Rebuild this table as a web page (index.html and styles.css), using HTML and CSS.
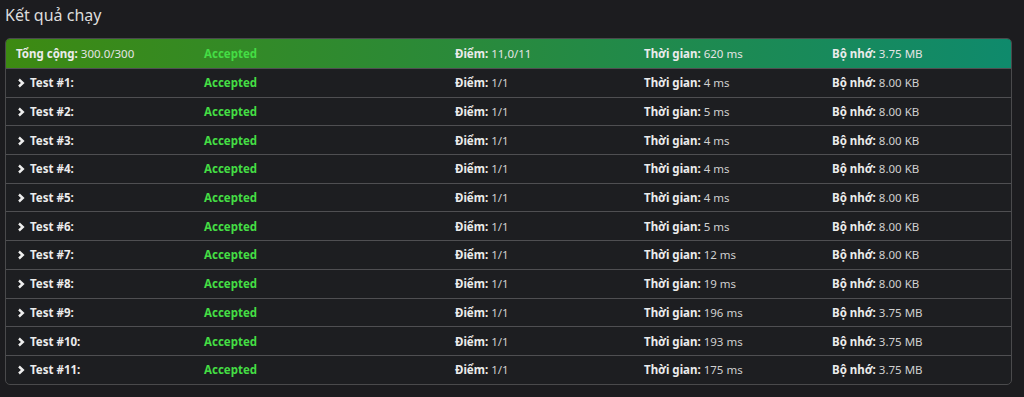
FILE: index.html
```html
<!DOCTYPE html>
<html lang="vi">
<head>
<meta charset="utf-8">
<title>Kết quả chạy</title>
<link rel="stylesheet" href="styles.css">
</head>
<body>
<div class="page">
  <h4 class="title">Kết quả chạy</h4>
  <div class="panel">
    <div class="row head">
      <div class="c1"><b>Tổng cộng:</b> 300.0/300</div>
      <div class="c2 ok">Accepted</div>
      <div class="c3"><b>Điểm:</b> 11,0/11</div>
      <div class="c4"><b>Thời gian:</b> 620 ms</div>
      <div class="c5"><b>Bộ nhớ:</b> 3.75 MB</div>
    </div>
    <div class="row"><div class="c1"><svg class="chev" viewBox="0 0 8 10"><polyline points="2,1.5 5.8,5 2,8.5"/></svg><b>Test #1:</b></div><div class="c2 ok">Accepted</div><div class="c3"><b>Điểm:</b> 1/1</div><div class="c4"><b>Thời gian:</b> 4 ms</div><div class="c5"><b>Bộ nhớ:</b> 8.00 KB</div></div>
    <div class="row"><div class="c1"><svg class="chev" viewBox="0 0 8 10"><polyline points="2,1.5 5.8,5 2,8.5"/></svg><b>Test #2:</b></div><div class="c2 ok">Accepted</div><div class="c3"><b>Điểm:</b> 1/1</div><div class="c4"><b>Thời gian:</b> 5 ms</div><div class="c5"><b>Bộ nhớ:</b> 8.00 KB</div></div>
    <div class="row"><div class="c1"><svg class="chev" viewBox="0 0 8 10"><polyline points="2,1.5 5.8,5 2,8.5"/></svg><b>Test #3:</b></div><div class="c2 ok">Accepted</div><div class="c3"><b>Điểm:</b> 1/1</div><div class="c4"><b>Thời gian:</b> 4 ms</div><div class="c5"><b>Bộ nhớ:</b> 8.00 KB</div></div>
    <div class="row"><div class="c1"><svg class="chev" viewBox="0 0 8 10"><polyline points="2,1.5 5.8,5 2,8.5"/></svg><b>Test #4:</b></div><div class="c2 ok">Accepted</div><div class="c3"><b>Điểm:</b> 1/1</div><div class="c4"><b>Thời gian:</b> 4 ms</div><div class="c5"><b>Bộ nhớ:</b> 8.00 KB</div></div>
    <div class="row"><div class="c1"><svg class="chev" viewBox="0 0 8 10"><polyline points="2,1.5 5.8,5 2,8.5"/></svg><b>Test #5:</b></div><div class="c2 ok">Accepted</div><div class="c3"><b>Điểm:</b> 1/1</div><div class="c4"><b>Thời gian:</b> 4 ms</div><div class="c5"><b>Bộ nhớ:</b> 8.00 KB</div></div>
    <div class="row"><div class="c1"><svg class="chev" viewBox="0 0 8 10"><polyline points="2,1.5 5.8,5 2,8.5"/></svg><b>Test #6:</b></div><div class="c2 ok">Accepted</div><div class="c3"><b>Điểm:</b> 1/1</div><div class="c4"><b>Thời gian:</b> 5 ms</div><div class="c5"><b>Bộ nhớ:</b> 8.00 KB</div></div>
    <div class="row"><div class="c1"><svg class="chev" viewBox="0 0 8 10"><polyline points="2,1.5 5.8,5 2,8.5"/></svg><b>Test #7:</b></div><div class="c2 ok">Accepted</div><div class="c3"><b>Điểm:</b> 1/1</div><div class="c4"><b>Thời gian:</b> 12 ms</div><div class="c5"><b>Bộ nhớ:</b> 8.00 KB</div></div>
    <div class="row"><div class="c1"><svg class="chev" viewBox="0 0 8 10"><polyline points="2,1.5 5.8,5 2,8.5"/></svg><b>Test #8:</b></div><div class="c2 ok">Accepted</div><div class="c3"><b>Điểm:</b> 1/1</div><div class="c4"><b>Thời gian:</b> 19 ms</div><div class="c5"><b>Bộ nhớ:</b> 8.00 KB</div></div>
    <div class="row"><div class="c1"><svg class="chev" viewBox="0 0 8 10"><polyline points="2,1.5 5.8,5 2,8.5"/></svg><b>Test #9:</b></div><div class="c2 ok">Accepted</div><div class="c3"><b>Điểm:</b> 1/1</div><div class="c4"><b>Thời gian:</b> 196 ms</div><div class="c5"><b>Bộ nhớ:</b> 3.75 MB</div></div>
    <div class="row"><div class="c1"><svg class="chev" viewBox="0 0 8 10"><polyline points="2,1.5 5.8,5 2,8.5"/></svg><b>Test #10:</b></div><div class="c2 ok">Accepted</div><div class="c3"><b>Điểm:</b> 1/1</div><div class="c4"><b>Thời gian:</b> 193 ms</div><div class="c5"><b>Bộ nhớ:</b> 3.75 MB</div></div>
    <div class="row"><div class="c1"><svg class="chev" viewBox="0 0 8 10"><polyline points="2,1.5 5.8,5 2,8.5"/></svg><b>Test #11:</b></div><div class="c2 ok">Accepted</div><div class="c3"><b>Điểm:</b> 1/1</div><div class="c4"><b>Thời gian:</b> 175 ms</div><div class="c5"><b>Bộ nhớ:</b> 3.75 MB</div></div>
  </div>
</div>
</body>
</html>
```
FILE: styles.css
```css
html, body {
  margin: 0;
  background: #1c1c1f;
}
body {
  font-family: "Noto Sans", "Open Sans", sans-serif;
  color: #d0d0d0;
}
.page {
  padding: 4px 12px 0 5px;
}
.title {
  margin: 0 0 12px 0;
  font-size: 16px;
  font-weight: normal;
  line-height: 22px;
  color: #dcdcdc;
}
.panel {
  border: 1px solid #4a4a4c;
  border-radius: 5px;
  overflow: hidden;
  background: #1d1e21;
}
.row {
  display: grid;
  grid-template-columns: 188px 251px 189px 188px 1fr;
  align-items: center;
  height: 28.7px;
  padding: 0 0 0 10px;
  font-size: 11.5px;
  border-top: 1px solid #4f4f52;
  box-sizing: border-box;
  white-space: nowrap;
}
.row.head {
  border-top: none;
  height: 29px;
  background: linear-gradient(to right, #3d8a12 0%, #2a8a3a 45%, #0f8a6c 100%);
  color: #e4e4e4;
}
.row b {
  font-weight: bold;
  color: #ececec;
}
.chev {
  display: inline-block;
  vertical-align: -1px;
  width: 8px;
  height: 10px;
  margin: 0 5px 0 1px;
  fill: none;
  stroke: #eeeeee;
  stroke-width: 2.4;
}
.ok {
  color: #44dd44;
  font-weight: bold;
}
```
